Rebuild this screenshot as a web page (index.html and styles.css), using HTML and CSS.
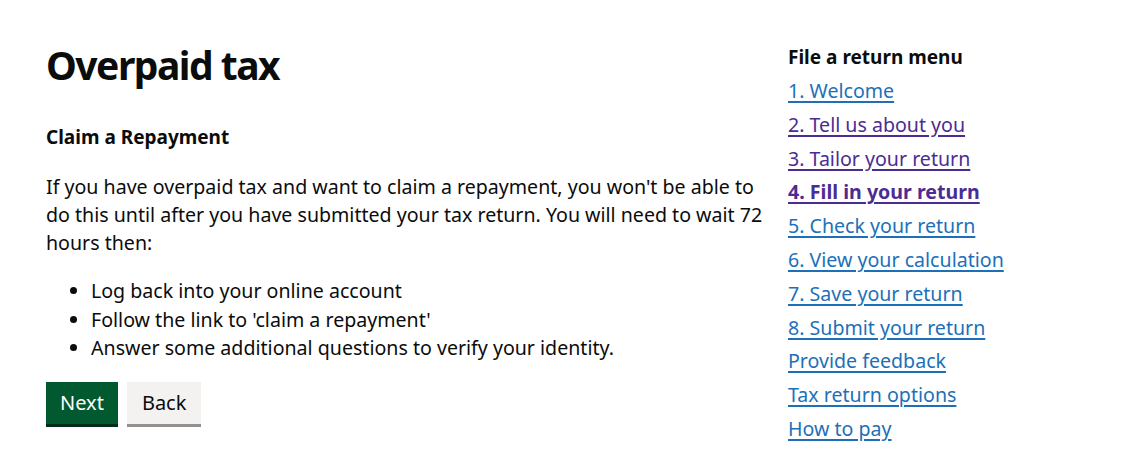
FILE: index.html
```html
<!DOCTYPE html>
<html lang="en">
<head>
    <meta charset="UTF-8">
    <meta name="viewport" content="width=device-width, initial-scale=1.0">
    <title>Overpaid tax</title>
    <link rel="stylesheet" href="styles.css">
</head>
<body>
    <div class="page">
        <main class="main-column">
            <h1 class="page-title">Overpaid tax</h1>
            <h2 class="sub-heading">Claim a Repayment</h2>
            <p class="body-text">If you have overpaid tax and want to claim a repayment, you won't be able to do this until after you have submitted your tax return. You will need to wait 72 hours then:</p>
            <ul class="bullet-list">
                <li>Log back into your online account</li>
                <li>Follow the link to 'claim a repayment'</li>
                <li>Answer some additional questions to verify your identity.</li>
            </ul>
            <div class="button-group">
                <button class="button button-primary">Next</button>
                <button class="button button-secondary">Back</button>
            </div>
        </main>
        <aside class="side-menu">
            <h2 class="menu-title">File a return menu</h2>
            <ul class="menu-list">
                <li><a href="#" class="menu-link">1. Welcome</a></li>
                <li><a href="#" class="menu-link visited">2. Tell us about you</a></li>
                <li><a href="#" class="menu-link visited">3. Tailor your return</a></li>
                <li><a href="#" class="menu-link visited current">4. Fill in your return</a></li>
                <li><a href="#" class="menu-link">5. Check your return</a></li>
                <li><a href="#" class="menu-link">6. View your calculation</a></li>
                <li><a href="#" class="menu-link">7. Save your return</a></li>
                <li><a href="#" class="menu-link">8. Submit your return</a></li>
                <li><a href="#" class="menu-link">Provide feedback</a></li>
                <li><a href="#" class="menu-link">Tax return options</a></li>
                <li><a href="#" class="menu-link">How to pay</a></li>
            </ul>
        </aside>
    </div>
</body>
</html>
```

FILE: styles.css
```css
body {
    margin: 0;
    font-family: "Noto Sans", Arial, sans-serif;
    color: #0b0c0c;
    background-color: white;
}
.page {
    display: grid;
    grid-template-columns: 730px 1fr;
    column-gap: 12px;
    padding: 0 20px 0 46px;
}
.main-column {
    padding-top: 40px;
}
.page-title {
    font-size: 39px;
    line-height: 50px;
    font-weight: 700;
    letter-spacing: -1.5px;
    margin: 0 0 33px 0;
}
.sub-heading {
    font-size: 19px;
    line-height: 28px;
    font-weight: 700;
    margin: 0 0 22px 0;
}
.body-text {
    font-size: 19.6px;
    line-height: 28px;
    margin: 0 0 20px 0;
}
.bullet-list {
    font-size: 19.6px;
    line-height: 28.5px;
    margin: 0 0 19px 0;
    padding-left: 45px;
}
.button-group {
    display: flex;
    gap: 9px;
}
.button {
    font-family: inherit;
    font-size: 20px;
    line-height: 24px;
    padding: 9px 14px;
    border: 0;
    border-radius: 0;
    cursor: pointer;
}
.button-primary {
    background-color: #00592f;
    color: white;
    box-shadow: 0 3px 0 #002d18;
}
.button-secondary {
    padding: 9px 15px;
    background-color: #f3f2f1;
    color: #0b0c0c;
    box-shadow: 0 3px 0 #929191;
}
.side-menu {
    padding-top: 43px;
}
.menu-title {
    font-size: 19px;
    line-height: 28px;
    font-weight: 700;
    margin: 0 0 6px 0;
}
.menu-list {
    list-style: none;
    margin: 0;
    padding: 0;
}
.menu-list li {
    font-size: 19.6px;
    line-height: 28px;
    margin-bottom: 5.8px;
}
.menu-link {
    color: #1d70b8;
    text-decoration: underline;
    text-decoration-thickness: 2px;
    text-underline-offset: 3px;
}
.menu-link.visited {
    color: #4c2c92;
}
.menu-link.current {
    font-weight: 700;
}
```
